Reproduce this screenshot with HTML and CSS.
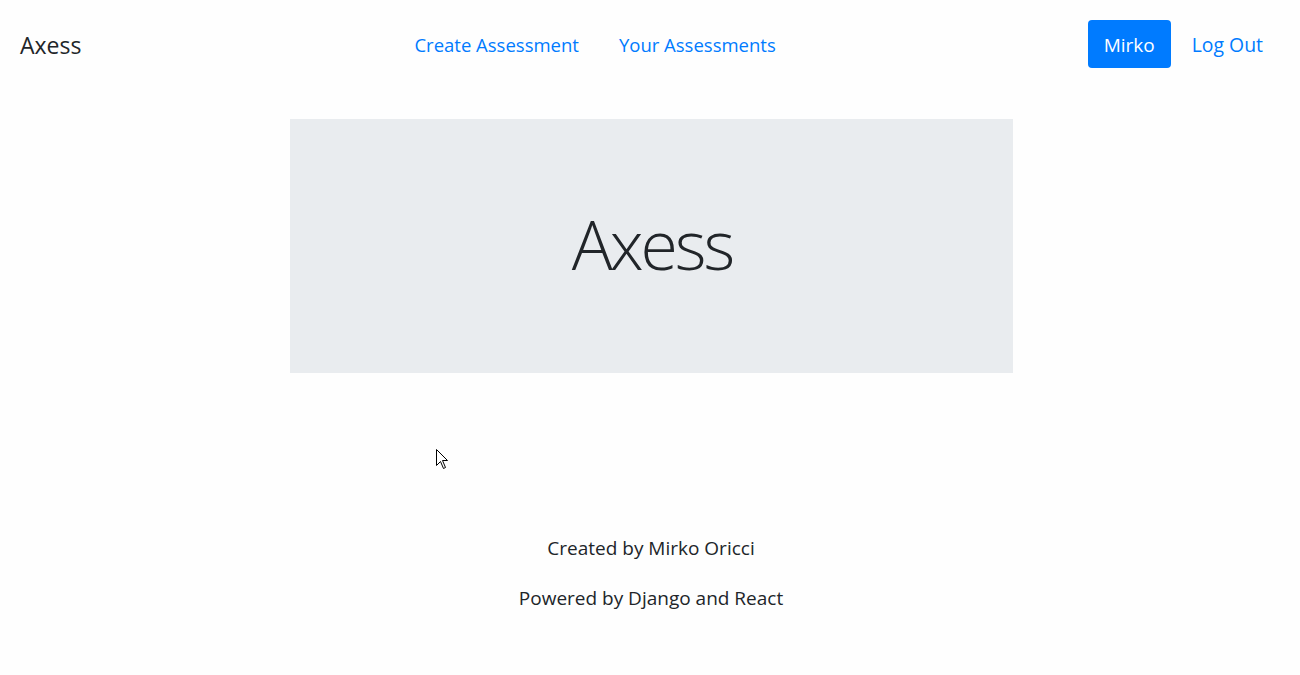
FILE: index.html
```html
<!DOCTYPE html>
<html lang="en">
<head>
<meta charset="utf-8">
<title>Axess</title>
<link rel="stylesheet" href="styles.css">
</head>
<body>
<nav class="navbar">
  <a class="brand" href="#">Axess</a>
  <ul class="nav-center">
    <li><a class="nav-link" href="#">Create Assessment</a></li>
    <li><a class="nav-link" href="#">Your Assessments</a></li>
  </ul>
  <div class="nav-right">
    <a class="btn-user" href="#">Mirko</a>
    <a class="nav-link logout" href="#">Log Out</a>
  </div>
</nav>
<main class="main">
  <section class="jumbotron">
    <h1 class="display">Axess</h1>
  </section>
</main>
<footer class="footer">
  <p>Created by Mirko Oricci</p>
  <p>Powered by Django and React</p>
</footer>
<svg class="cursor" width="13" height="21" viewBox="0 0 13 21">
  <path d="M0.5 0.5 L0.5 16.5 L4.5 12.5 L7.5 19.5 L9.5 18.5 L6.5 11.5 L11.5 11.5 Z" fill="#fff" stroke="#000" stroke-width="1" stroke-linejoin="miter"/>
</svg>
</body>
</html>
```
FILE: styles.css
```css
* { box-sizing: border-box; }
html, body { margin: 0; padding: 0; }
body {
  font-family: "Open Sans", "Noto Sans", "Liberation Sans", sans-serif;
  color: #212529;
  background: #fefefe;
  font-size: 19px;
  width: 1300px;
  height: 675px;
  position: relative;
  overflow: hidden;
}
a { text-decoration: none; }
.navbar {
  display: flex;
  align-items: center;
  height: 88px;
  padding: 0 20px;
}
.brand {
  color: #212529;
  font-size: 23px;
  padding-top: 2px;
}
.nav-center {
  list-style: none;
  margin: 0 auto;
  padding: 1px 0 0 21px;
  display: flex;
}
.nav-link {
  color: #007bff;
  font-size: 18.5px;
  padding: 0 20px;
  display: block;
}
.nav-right {
  display: flex;
  align-items: center;
}
.btn-user {
  background: #007bff;
  color: #fff;
  font-size: 19px;
  border-radius: 4px;
  height: 48px;
  width: 83px;
  display: flex;
  align-items: center;
  justify-content: center;
  padding-top: 1px;
}
.nav-link.logout { padding: 1px 17px 0 21px; font-size: 19.4px; }
.main {
  display: flex;
  justify-content: center;
  padding-top: 31px;
  padding-left: 2px;
}
.jumbotron {
  width: 723px;
  height: 254px;
  background: #e9ecef;
  display: flex;
  align-items: center;
  justify-content: center;
}
.display {
  margin: 0;
  font-size: 68px;
  letter-spacing: -3px;
  font-weight: 300;
  line-height: 1;
  padding-bottom: 4px;
  padding-left: 2px;
}
.footer {
  text-align: center;
  padding-top: 163px;
  font-size: 19px;
  padding-left: 2px;
}
.footer p { margin: 0 0 25px; line-height: 25px; }
.cursor {
  position: absolute;
  left: 436px;
  top: 449px;
}
```
